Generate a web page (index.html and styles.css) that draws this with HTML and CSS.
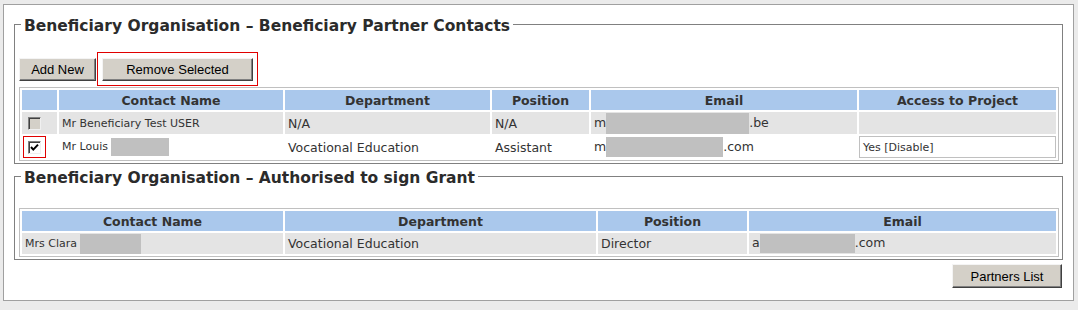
FILE: index.html
```html
<!DOCTYPE html>
<html lang="en">
<head>
<meta charset="utf-8">
<title>Beneficiary Partner Contacts</title>
<link rel="stylesheet" href="styles.css">
</head>
<body>
<div class="panel">
  <fieldset class="group group-contacts">
    <legend class="group-title">Beneficiary Organisation – Beneficiary Partner Contacts</legend>
    <div class="toolbar">
      <button class="btn btn-add" type="button">Add New</button>
      <div class="highlight">
        <button class="btn btn-remove" type="button">Remove Selected</button>
      </div>
    </div>
    <table class="grid grid-contacts">
      <colgroup>
        <col class="c-check"><col class="c-name"><col class="c-dept"><col class="c-pos"><col class="c-email"><col class="c-access">
      </colgroup>
      <thead>
        <tr><th></th><th>Contact Name</th><th>Department</th><th>Position</th><th>Email</th><th>Access to Project</th></tr>
      </thead>
      <tbody>
        <tr class="row-grey">
          <td class="check"><span class="cb-wrap"><span class="cb cb-disabled"></span></span></td>
          <td class="name">Mr Beneficiary Test USER</td>
          <td>N/A</td>
          <td>N/A</td>
          <td>m<span class="redact r-email1"></span>.be</td>
          <td></td>
        </tr>
        <tr>
          <td class="check"><span class="cb-wrap flagged"><span class="cb cb-checked"><svg viewBox="0 0 11 11" width="11" height="11"><polyline points="2,5 4.3,7.6 9,2.6" fill="none" stroke="#000" stroke-width="2"/></svg></span></span></td>
          <td class="name">Mr Louis <span class="redact r-louis"></span></td>
          <td>Vocational Education</td>
          <td>Assistant</td>
          <td>m<span class="redact r-email2"></span>.com</td>
          <td class="access">Yes [Disable]</td>
        </tr>
      </tbody>
    </table>
  </fieldset>

  <fieldset class="group group-sign">
    <legend class="group-title">Beneficiary Organisation – Authorised to sign Grant</legend>
    <table class="grid grid-sign">
      <colgroup>
        <col class="s-name"><col class="s-dept"><col class="s-pos"><col class="s-email">
      </colgroup>
      <thead>
        <tr><th>Contact Name</th><th>Department</th><th>Position</th><th>Email</th></tr>
      </thead>
      <tbody>
        <tr class="row-grey">
          <td class="name">Mrs Clara <span class="redact r-clara"></span></td>
          <td>Vocational Education</td>
          <td>Director</td>
          <td>a<span class="redact r-email3"></span>.com</td>
        </tr>
      </tbody>
    </table>
  </fieldset>

  <div class="footer">
    <button class="btn btn-partners" type="button">Partners List</button>
  </div>
</div>
</body>
</html>
```
FILE: styles.css
```css
* { box-sizing: border-box; }

body {
  margin: 0;
  background: #ebebeb;
  font-family: "DejaVu Sans", Verdana, sans-serif;
  color: #333;
}

.panel {
  display: flow-root;
  margin: 4px 0 0 3px;
  width: 1071px;
  border: 1px solid #a0a0a0;
  background: #fff;
  padding: 0 0 12px;
}

.group {
  margin: 7px 10px 0;
  padding: 16px 3px 2px 4px;
  border: 1px solid #808080;
  min-width: 0;
}

.group-sign {
  margin-top: 0;
  padding-top: 19px;
}

.group-title {
  margin-left: 2px;
  padding: 4px 3px 0;
  line-height: 20px;
  font-size: 15.5px;
  font-weight: bold;
  color: #2b2b2b;
}

.toolbar {
  display: flex;
  align-items: flex-end;
  height: 34px;
}

.btn {
  display: block;
  height: 23px;
  padding: 0;
  background: #d4d0c8;
  border: 1px solid;
  border-color: #f4f4f4 #404040 #404040 #f4f4f4;
  box-shadow: inset -1px -1px 0 #808080;
  font-family: "Liberation Sans", Arial, sans-serif;
  font-size: 13px;
  color: #000;
  text-align: center;
}

.btn-add {
  width: 77px;
  margin: 0 1px 5px 0;
}

.highlight {
  border: 1px solid #e00000;
  padding: 5px 4px 4px;
}

.btn-remove { width: 151px; }

.grid {
  table-layout: fixed;
  width: 1040px;
  margin-top: 1px;
  border: 1px solid #c0c0c0;
  border-collapse: separate;
  border-spacing: 2px;
}

.c-check { width: 35px; }
.c-name { width: 224px; }
.c-dept { width: 205px; }
.c-pos { width: 97px; }
.c-email { width: 266px; }
.c-access { width: 197px; }

.s-name { width: 261px; }
.s-dept { width: 311px; }
.s-pos { width: 149px; }
.s-email { width: 307px; }

.grid th {
  height: 20px;
  padding: 0 3px;
  background: #aac8ec;
  font-size: 12.5px;
  font-weight: bold;
  color: #333;
  text-align: center;
  vertical-align: middle;
  white-space: nowrap;
}

.grid td {
  height: 22px;
  padding: 0 3px;
  font-size: 12.5px;
  color: #333;
  vertical-align: middle;
  white-space: nowrap;
  overflow: hidden;
}

.grid-sign td { height: 21px; }

.row-grey td { background: #e4e4e4; }

.grid td.name { font-size: 11px; }

.grid td.check { padding: 0 0 0 1px; line-height: 0; }

.cb-wrap {
  display: inline-block;
  padding: 4px 4px 3px;
  border: 1px solid transparent;
}

.cb-wrap.flagged { border-color: #e00000; }

.cb {
  display: block;
  width: 13px;
  height: 13px;
  border: 1px solid;
  border-color: #808080 #f0f0f0 #f0f0f0 #808080;
  box-shadow: inset 1px 1px 0 #404040;
}

.cb-disabled { background: #d4d0c8; }
.cb-checked { background: #fff; }
.cb svg { display: block; }

.grid td.access {
  border: 1px solid #c0c0c0;
  font-size: 11px;
}

.redact {
  display: inline-block;
  vertical-align: middle;
  background: #c0c0c0;
}

.r-email1 { width: 143px; height: 21px; }
.r-email2 { width: 117px; height: 20px; }
.r-louis { width: 58px; height: 18px; }
.r-clara { width: 61px; height: 20px; }
.r-email3 { width: 95px; height: 19px; }

.footer {
  display: flex;
  justify-content: flex-end;
  margin: 4px 11px 0 0;
}

.btn-partners {
  width: 110px;
  height: 24px;
}
```
